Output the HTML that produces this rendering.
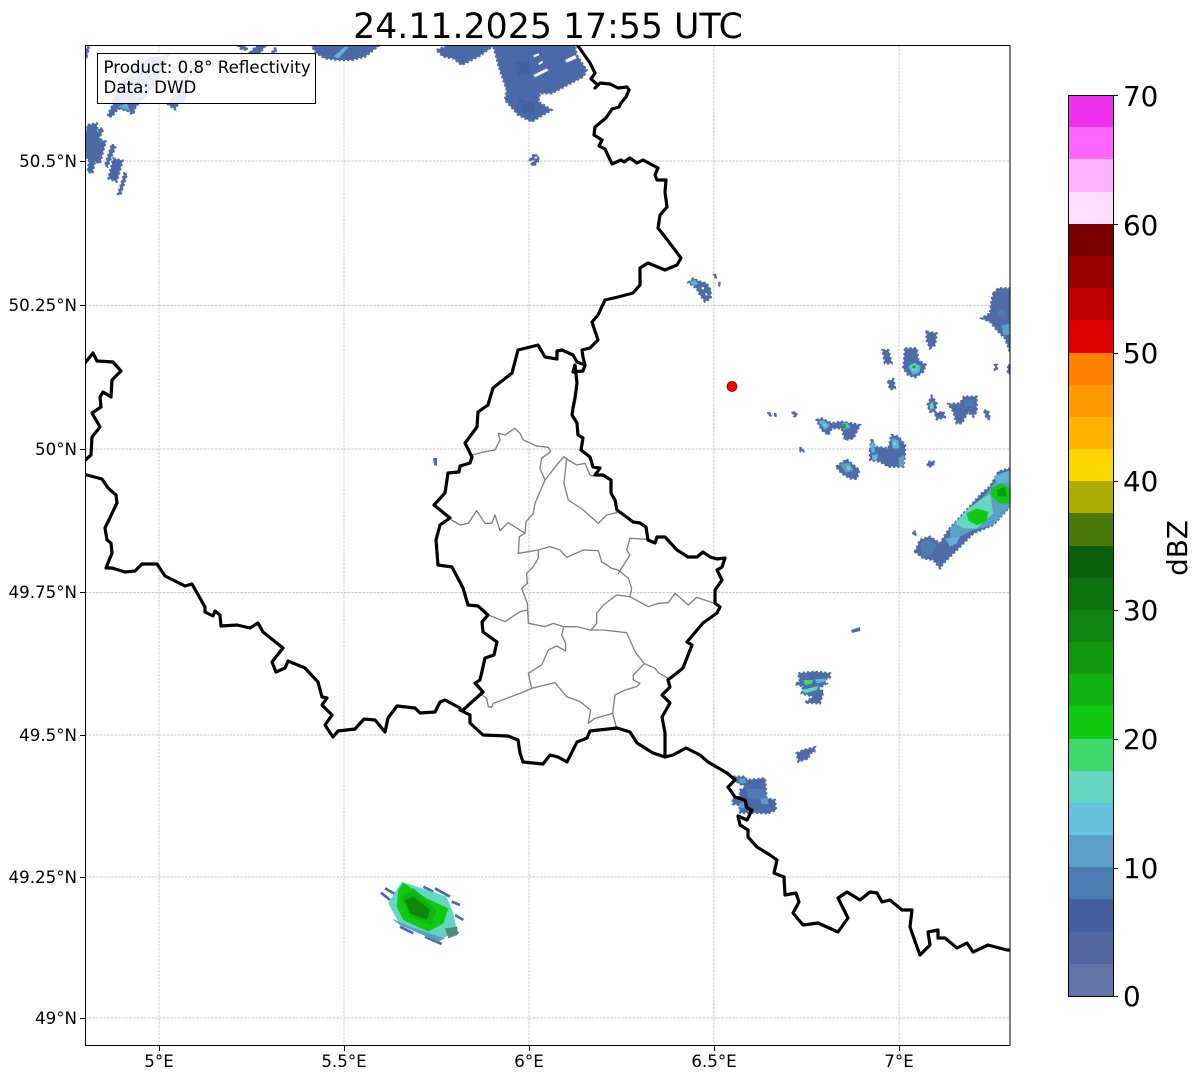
<!DOCTYPE html>
<html><head><meta charset="utf-8"><title>Radar</title>
<style>html,body{margin:0;padding:0;background:#fff}svg{display:block}text{font-family:"DejaVu Sans",sans-serif;fill:#000}
.e polygon{stroke:#4f6ca8;stroke-width:7;stroke-dasharray:7 6}
.e polygon[fill]{stroke:none}
</style></head>
<body>
<svg width="1202" height="1081" viewBox="0 0 1202 1081" xmlns="http://www.w3.org/2000/svg">
<rect width="1202" height="1081" fill="#fff"/>
<text x="548" y="38" font-size="34.72" text-anchor="middle">24.11.2025 17:55 UTC</text>
<!-- grid -->
<g stroke="#b4b4b4" stroke-width="0.7" stroke-dasharray="2.6 1.1" fill="none">
<path d="M159 45V1046M344 45V1046M529 45V1046M714 45V1046M899 45V1046"/>
<path d="M85 161H1010M85 305.5H1010M85 449H1010M85 592.5H1010M85 735H1010M85 877H1010M85 1018H1010"/>
</g>
<svg x="85" y="45" width="925" height="1001" viewBox="85 45 925 1001">
<!-- echoes top-left (zoom 1 coords) -->
<g class="e" transform="translate(85 40) scale(.33333)" fill="#4a69a8">
<polygon points="1225,18 1470,18 1475,45 1505,90 1495,110 1400,160 1365,160 1360,185 1400,210 1340,245 1300,225 1260,180 1265,150 1240,75"/>
<polygon points="1290,70 1330,60 1340,100 1300,110" fill="#4560a2"/>
<polygon points="1300,175 1350,190 1350,225 1310,215" fill="#4560a2"/>
<g><polygon points="1345,105 1385,85 1390,92 1350,112" fill="#fff"/><polygon points="1440,60 1470,45 1475,55 1445,68" fill="#fff"/><polygon points="1345,45 1362,40 1362,46 1347,52" fill="#fff"/><polygon points="1360,70 1372,62 1374,68 1362,75" fill="#fff"/></g>
<polygon points="1055,30 1085,18 1225,18 1180,50 1130,75 1105,55 1075,50"/>
<polygon points="680,18 880,18 840,50 800,60 760,60 720,55 695,40"/>
<polygon points="745,50 780,20 790,22 760,55" fill="#5fb4d4"/>
<polygon points="495,38 515,18 540,18 525,40"/>
<polygon points="460,18 480,18 488,30 470,28"/>
<polygon points="560,38 570,25 576,27 568,40"/>
<polygon points="68,228 85,190 160,190 150,205 145,222 138,220 135,215 100,205 80,230"/>
<polygon points="85,205 125,190 135,212 100,200" fill="#5fb4d4"/>
<polygon points="245,190 280,190 270,208"/>
<polygon points="0,45 8,20 12,25 5,50"/>
<polygon points="8,255 35,250 40,295 62,305 45,370 30,365 22,400 8,395 12,362 2,350 2,280"/>
<polygon points="80,315 92,318 68,380 60,376"/>
<polygon points="85,355 113,362 95,425 70,415"/>
<polygon points="118,400 126,403 106,465 99,462"/>
<polygon points="45,265 55,268 42,295 36,290"/>
<polygon points="1335,360 1347,342 1353,346 1342,362"/>
<polygon points="1340,372 1358,352 1364,358 1346,378"/>
</g>
<!-- faint under legend -->
<g fill="#4a69a8"><polygon points="110,103 125,78 148,58 170,54 155,85 140,103"/><polygon points="168,103 190,70 185,103"/></g>
<!-- 6.5E small echo (680,270) -->
<g class="e" transform="translate(680 270) scale(.33333)" fill="#4f6ca8">
<polygon points="25,38 40,25 60,35 80,40 92,60 92,85 75,95 60,75 50,55"/>
<polygon points="30,35 45,30 55,42 40,48" fill="#5fb4d4"/>
<polygon points="65,52 72,52 72,58 65,58" fill="#fff"/><polygon points="76,70 82,70 82,76 76,76" fill="#fff"/>
<polygon points="102,15 110,15 108,22 102,20"/><polygon points="115,40 122,38 118,45"/>
</g>
<g fill="#4f6ca8"><polygon points="433,458 437,458 437,466 434,465"/></g>
<!-- right echoes (zoom 3 coords) -->
<g class="e" transform="translate(760 280) scale(.33333)" fill="#4f6ca8">
<polygon points="700,40 715,25 750,25 750,215 735,175 710,150 690,125 665,115 690,100 695,60"/>
<polygon points="725,135 750,130 750,165 730,165" fill="#5b9ec6"/><polygon points="715,90 735,90 735,110 715,110" fill="#4d7cb2"/>
<polygon points="500,155 530,160 525,195 510,205 500,180"/>
<polygon points="368,210 385,210 395,250 375,250"/>
<polygon points="435,205 470,205 475,240 497,255 490,275 465,292 445,285 430,265"/>
<polygon points="445,260 462,248 482,258 478,278 458,285" fill="#5fb4d4"/>
<polygon points="452,260 462,252 474,260 470,274 456,272" fill="#64d6c2"/><circle cx="462" cy="261" r="5" fill="#11b511"/>
<polygon points="385,305 400,297 405,325 390,328"/>
<polygon points="503,375 515,348 530,370 525,395 510,395"/><polygon points="508,375 518,365 522,385 512,390" fill="#64d6c2"/>
<polygon points="525,400 550,395 555,412 530,418"/>
<polygon points="565,372 600,370 612,350 650,350 650,395 640,410 625,395 605,430 590,430 580,395"/>
<polygon points="615,360 640,360 640,380 615,380" fill="#4d7cb2"/>
<polygon points="672,392 684,392 690,418 680,415"/>
<polygon points="170,420 185,415 215,430 245,425 275,430 300,435 280,475 255,480 245,445 215,445 205,465 185,450"/>
<polygon points="175,425 190,420 210,435 195,450" fill="#5fb4d4"/><polygon points="245,430 262,428 272,442 250,450" fill="#5fb4d4"/>
<polygon points="246,433 258,431 258,445 248,445" fill="#11b511"/><circle cx="195" cy="437" r="5" fill="#64d6c2"/>
<polygon points="330,510 335,475 345,500 385,505 395,465 415,470 435,495 435,525 430,560 385,560 360,545 330,540"/>
<polygon points="395,475 415,480 418,505 398,505" fill="#5fb4d4"/><circle cx="404" cy="491" r="5" fill="#64d6c2"/>
<polygon points="332,495 342,480 345,515 335,520" fill="#5fb4d4"/><polygon points="335,525 355,522 350,542 338,540" fill="#5fb4d4"/>
<polygon points="415,535 432,525 432,560 418,560" fill="#5b9ec6"/>
<polygon points="228,560 260,538 280,555 298,570 290,597 270,595 245,580"/>
<polygon points="240,552 270,548 280,572 258,578" fill="#5b9ec6"/><circle cx="266" cy="564" r="6" fill="#64d6c2"/>
<polygon points="505,545 525,545 515,560 502,558"/>
<polygon points="25,400 33,400 33,406 25,406"/><polygon points="42,402 50,402 50,407 42,407"/><polygon points="98,398 108,396 110,410 102,408"/><polygon points="118,504 126,504 130,514 122,514"/>
<polygon points="460,755 468,755 466,765 460,765"/><polygon points="705,255 711,255 711,270 705,270"/><polygon points="745,255 750,255 750,280 743,280"/>
<polygon points="465,815 480,780 510,770 540,790 565,750 620,690 665,640 690,620 715,575 750,565 750,680 700,735 640,760 610,790 550,850 540,865 520,840 490,835"/>
<polygon points="570,745 625,690 680,640 715,590 750,575 750,680 700,735 640,750 600,770 570,790" fill="#5b9ec6"/>
<polygon points="555,775 600,770 590,790 570,800" fill="#5fb4d4"/>
<polygon points="585,730 625,685 690,640 700,700 650,745 610,745" fill="#64d6c2"/>
<polygon points="620,700 650,685 685,695 680,725 650,735 625,722" fill="#11c911"/>
<polygon points="693,625 725,610 750,625 750,670 720,670 695,650" fill="#11c911"/>
<polygon points="710,630 735,620 740,650 715,650" fill="#109a10"/>
<polygon points="700,590 725,580 750,570 750,605 715,612" fill="#5fb4d4"/>
<polygon points="480,790 510,775 530,795 515,825 490,830" fill="#4d7cb2"/>
</g>
<!-- lower right echoes (785,660) -->
<g class="e" transform="translate(785 660) scale(.33333)" fill="#4f6ca8">
<polygon points="40,40 90,35 135,40 135,52 115,60 125,70 100,85 115,95 105,130 60,128 85,110 50,100 55,80 30,72 45,65"/>
<polygon points="55,60 85,60 80,72 60,75" fill="#3dd96f"/>
<polygon points="50,90 100,78 95,90 60,100" fill="#64d6c2"/>
<polygon points="90,58 125,55 120,65 95,70" fill="#5fb4d4"/>
<polygon points="35,280 55,270 90,262 88,275 75,280 70,295 40,305"/>
</g>
<g fill="#4f6ca8"><polygon points="851,630 860,627 860,631 852,633"/></g>
<g class="e" transform="translate(660 730) scale(.33333)" fill="#4a69a8">
<polygon points="220,140 255,140 260,150 315,145 320,205 345,210 348,240 325,250 280,248 240,248 238,225 218,222 218,205 240,200 240,180 260,170 235,160"/>
<polygon points="235,145 255,145 258,160 240,160" fill="#5b9ec6"/>
<polygon points="300,200 322,202 325,222 305,222" fill="#5b9ec6"/>
<polygon points="238,218 252,218 252,235 240,235" fill="#5b9ec6"/>
<polygon points="260,175 315,178 320,205 265,205" fill="#4d7cb2"/>
</g>
<!-- bottom green cell (zoom 4 coords) -->
<g transform="translate(370 870) scale(.33333)">
<g stroke="#4a69a8" stroke-width="8" fill="none"><path d="M45 55L75 72M33 68L60 90M160 50L190 65M195 55L240 80M245 95L270 105M255 135L280 150M240 175L265 190M165 200L215 222M90 170L130 190"/></g>
<polygon points="55,100 95,35 230,80 250,130 260,180 205,215 90,165" fill="#64d6c2"/>
<polygon points="65,145 90,165 205,215 225,205 120,170" fill="#5b9ec6"/>
<polygon points="85,60 100,38 170,85 235,115 220,160 175,185 100,150 80,110" fill="#11c911"/>
<polygon points="95,80 130,55 200,120 185,165 120,140" fill="#11b511"/>
<polygon points="105,90 130,80 180,120 170,150 120,130" fill="#0e850e"/>
<polygon points="225,175 262,170 262,195 235,205" fill="#4f8a7a"/>
</g>
<!-- admin lines -->
<g transform="translate(420 340) scale(.33333)" fill="none" stroke="#808080" stroke-width="4" stroke-linejoin="round" stroke-linecap="round">
<polyline points="155,345 195,335 225,330 240,300 235,280 255,285 285,265 300,280 310,300 350,318 385,322 392,335 365,355 360,385 375,420 345,490 340,520 318,545 315,580"/>
<polyline points="315,580 265,548 240,572 225,525 215,550 195,550 170,512 145,550 120,555 95,540"/>
<polyline points="375,420 410,375 432,350 445,360 470,375 495,370 510,405 520,408"/>
<polyline points="440,355 432,430 445,480 490,510 535,550 560,525 590,518"/>
<polyline points="315,580 298,590 295,640 355,630 390,620 420,630 440,652 490,630 535,632 545,665 575,685 595,690 625,715 635,745 630,770"/>
<polyline points="680,598 630,595 620,630 630,645 595,700"/>
<polyline points="355,632 355,655 340,680 320,700 322,730 305,745 322,790 325,850 375,860 400,850 430,860 470,860 510,870 550,870 620,878 645,935 672,970 705,985 715,998 745,1015"/>
<polyline points="630,770 590,765 550,795 530,820 530,850 515,868"/>
<polyline points="630,770 685,800 715,790 745,788 765,760 805,795 830,772 885,790"/>
<polyline points="205,825 255,845 300,815 322,810"/>
<polyline points="430,865 425,885 437,910 437,933 410,918 385,930 365,975 325,1000 335,1045 405,1028 440,1070 480,1085 512,1110 505,1150 525,1135 578,1120"/>
<polyline points="335,1045 300,1060 260,1075 220,1090 215,1102 205,1100 200,1075 185,1065"/>
<polyline points="672,972 640,1005 640,1020 660,1030 650,1040 615,1050 585,1065 578,1120 590,1165"/>
</g>
<!-- national borders -->
<g fill="none" stroke="#000" stroke-width="3.2" stroke-linejoin="round" stroke-linecap="round">
<polyline points="578,46 583,53 590,63 595,73 591,79 598,85 595,88 600,83 610,84 618,88 627,87 629,90 626,97 621,103 619,107 612,109 606,118 595,127 594,135 602,140 599,146 605,149 612,164 621,160 624,162 630,158 637,163 643,160 658,168 655,175 657,180 666,180 665,192 667,207 660,215 658,228 672,246 681,258 677,265 665,270 648,263 640,268 640,285 633,293 618,297 605,300 598,315 592,322 598,340 590,348 582,350 583,357 585,365 583,371 573,372 575,365 577,383 575,398 573,408 572,415 577,423 578,435 583,438 581,450 590,457 593,467 600,468 595,475 603,475 611,480 611,493 615,500 617,510 628,518 633,522 640,523 646,527 648,540 655,543 657,537 665,537 677,550 688,557 697,557 703,552 710,557 717,559 725,558 722,567 717,570 722,580 715,590 715,603 720,607 717,613 703,623 687,642 692,645 683,668 668,680 670,687 662,695 670,703 662,717 665,733 665,757"/>
<polyline points="585,365 577,362 573,355 562,350 557,351 557,359 545,357 538,345 518,350 512,373 493,388 488,405 478,412 477,427 465,443 472,457 470,463 460,466 459,472 448,473 445,493 434,505 450,518 440,525 436,540 438,565 452,567 463,588 468,605 478,606 488,615 482,622 483,632 497,642 494,655 485,658 480,680 475,683 483,692 463,710"/>
<polyline points="460,710 470,715 470,723 483,735 508,736 518,740 520,753 523,762 543,764 550,755 558,757 567,762 577,742 587,738 590,731 617,728 630,732 637,743 653,753 665,757 673,755 686,748 700,755 708,762 727,773 735,780 728,787 735,797 745,800 747,808 752,810 747,820 738,816 740,825 748,830 748,837 757,847 770,855 777,860 774,873 784,877 785,895 796,893 799,902 793,913 803,925 818,923 838,932 848,918 838,898 847,892 860,900 870,892 877,893 882,902 890,900 902,910 912,910 910,927 917,947 920,955 930,945 928,932 938,930 938,938 945,938 957,948 967,943 973,952 988,945 1007,950 1012,950"/>
<polyline points="83,474 102,479 108,488 116,495 117,503 105,528 107,540 111,543 112,553 106,568 112,568 125,572 135,571 142,564 157,564 165,576 185,586 192,584 205,607 205,612 213,616 215,611 220,615 221,626 237,625 250,628 258,623 263,632 283,648 272,662 276,672 285,668 288,661 305,668 318,682 322,697 327,698 322,705 332,715 325,725 333,737 338,731 355,729 364,719 375,720 385,732 388,718 397,706 415,708 420,713 435,712 440,702 445,700 460,708"/>
<polyline points="83,365 85,363 93,353 97,361 113,362 121,371 112,380 111,397 103,392 100,397 101,407 92,413 100,427 92,437 91,455 83,462"/>
</g>
<circle cx="732" cy="386.5" r="5" fill="#f00" stroke="#500" stroke-width=".7"/>
</svg>
<rect x="85.5" y="45.5" width="924.5" height="1000" fill="none" stroke="#000" stroke-width="1"/>
<!-- legend -->
<rect x="97.5" y="53.5" width="218" height="50" fill="#fff" fill-opacity=".88" stroke="#000" stroke-width="1"/>
<text x="103.5" y="73" font-size="16.67">Product: 0.8° Reflectivity</text>
<text x="103.5" y="93" font-size="16.67">Data: DWD</text>
<!-- ticks -->
<g stroke="#000" stroke-width="1"><path d="M159.5 1046v5M344.5 1046v5M529.5 1046v5M714.5 1046v5M899.5 1046v5M85 161.5h-5M85 305.5h-5M85 449.5h-5M85 592.5h-5M85 735.5h-5M85 877.5h-5M85 1018.5h-5"/></g>
<g font-size="16.67" text-anchor="middle">
<text x="159" y="1067">5°E</text><text x="344" y="1067">5.5°E</text><text x="529" y="1067">6°E</text><text x="714" y="1067">6.5°E</text><text x="899" y="1067">7°E</text>
</g>
<g font-size="16.67" text-anchor="end">
<text x="77" y="167">50.5°N</text><text x="77" y="311">50.25°N</text><text x="77" y="455">50°N</text><text x="77" y="598">49.75°N</text><text x="77" y="741">49.5°N</text><text x="77" y="883">49.25°N</text><text x="77" y="1024">49°N</text>
</g>
<!-- colorbar -->
<g shape-rendering="crispEdges">
<rect x="1068" y="95" width="45" height="33" fill="#ee2fee"/><rect x="1068" y="127" width="45" height="33" fill="#ff66ff"/><rect x="1068" y="159" width="45" height="33" fill="#ffb2ff"/><rect x="1068" y="192" width="45" height="33" fill="#ffddff"/>
<rect x="1068" y="224" width="45" height="33" fill="#7a0000"/><rect x="1068" y="256" width="45" height="33" fill="#9b0000"/><rect x="1068" y="288" width="45" height="33" fill="#bb0000"/><rect x="1068" y="320" width="45" height="33" fill="#e00000"/>
<rect x="1068" y="353" width="45" height="33" fill="#ff7f00"/><rect x="1068" y="385" width="45" height="33" fill="#ff9900"/><rect x="1068" y="417" width="45" height="33" fill="#ffb300"/><rect x="1068" y="449" width="45" height="33" fill="#ffd700"/>
<rect x="1068" y="481" width="45" height="33" fill="#adad05"/><rect x="1068" y="513" width="45" height="33" fill="#4b7a08"/><rect x="1068" y="546" width="45" height="33" fill="#0a5f0a"/><rect x="1068" y="578" width="45" height="33" fill="#0c730c"/>
<rect x="1068" y="610" width="45" height="33" fill="#0e850e"/><rect x="1068" y="642" width="45" height="33" fill="#109a10"/><rect x="1068" y="674" width="45" height="33" fill="#11b511"/><rect x="1068" y="706" width="45" height="33" fill="#11c911"/>
<rect x="1068" y="739" width="45" height="33" fill="#3dd96f"/><rect x="1068" y="771" width="45" height="33" fill="#64d6c2"/><rect x="1068" y="803" width="45" height="33" fill="#66c2de"/><rect x="1068" y="835" width="45" height="33" fill="#5b9ec6"/>
<rect x="1068" y="867" width="45" height="33" fill="#4d7cb2"/><rect x="1068" y="899" width="45" height="33" fill="#4560a2"/><rect x="1068" y="932" width="45" height="33" fill="#5367a0"/><rect x="1068" y="964" width="45" height="33" fill="#6375a8"/>
</g>
<rect x="1068.5" y="95.5" width="45" height="901" fill="none" stroke="#000" stroke-width="1"/>
<path d="M1113 95.5h5M1113 224.5h5M1113 353.5h5M1113 481.5h5M1113 610.5h5M1113 739.5h5M1113 868.5h5M1113 996.5h5" stroke="#000" stroke-width="1"/>
<g font-size="27.78">
<text x="1123" y="106">70</text><text x="1123" y="235">60</text><text x="1123" y="363">50</text><text x="1123" y="491">40</text><text x="1123" y="620">30</text><text x="1123" y="749">20</text><text x="1123" y="878">10</text><text x="1123" y="1006">0</text>
</g>
<text transform="translate(1187 548) rotate(-90)" font-size="27.78" text-anchor="middle">dBZ</text>
</svg>
</body></html>
